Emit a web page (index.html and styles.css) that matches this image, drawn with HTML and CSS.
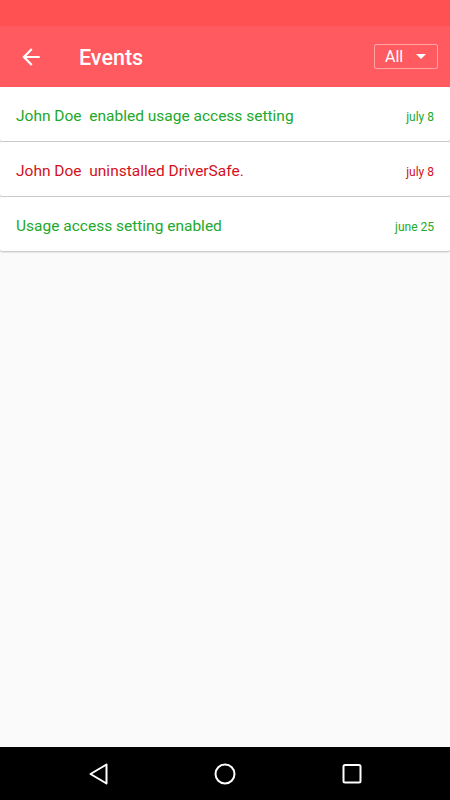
FILE: index.html
```html
<!DOCTYPE html>
<html lang="en">
<head>
  <meta charset="UTF-8">
  <title>Events</title>
  <link rel="stylesheet" href="styles.css">
</head>
<body>
  <div class="phone">
    <div class="status-bar"></div>

    <header class="app-bar">
      <svg class="back" viewBox="0 0 24 24" width="26" height="26">
        <path d="M20 11H7.83l5.59-5.59L12 4l-8 8 8 8 1.41-1.41L7.83 13H20v-2z" fill="#fff"/>
      </svg>
      <h1 class="title">Events</h1>
      <div class="filter">
        <span>All</span>
        <span class="caret"></span>
      </div>
    </header>

    <main class="events">
      <div class="event ok">
        <span class="text">John Doe&nbsp; enabled usage access setting</span>
        <span class="date">july 8</span>
      </div>
      <div class="event bad">
        <span class="text">John Doe&nbsp; uninstalled DriverSafe.</span>
        <span class="date">july 8</span>
      </div>
      <div class="event ok">
        <span class="text">Usage access setting enabled</span>
        <span class="date">june 25</span>
      </div>
    </main>

    <nav class="nav-bar">
      <svg viewBox="0 0 24 24" width="24" height="24">
        <path d="M20.5 2.5 L4.5 12 L20.5 21.5 Z" fill="none" stroke="#fff" stroke-width="2" stroke-linejoin="round"/>
      </svg>
      <svg viewBox="0 0 24 24" width="24" height="24">
        <circle cx="12" cy="12" r="9.5" fill="none" stroke="#fff" stroke-width="2"/>
      </svg>
      <svg viewBox="0 0 24 24" width="24" height="24">
        <rect x="3.5" y="3" width="17" height="17.5" rx="1.5" fill="none" stroke="#fff" stroke-width="2"/>
      </svg>
    </nav>
  </div>
</body>
</html>
```
FILE: styles.css
```css
body {
  margin: 0;
  background: #fafafa;
  font-family: Roboto, "Noto Sans", sans-serif;
}
.phone {
  width: 450px;
  height: 800px;
  display: flex;
  flex-direction: column;
}
.status-bar {
  height: 26px;
  background: #ff5052;
}
.app-bar {
  height: 61px;
  background: #ff5a5f;
  display: flex;
  align-items: center;
  color: #fff;
}
.back {
  margin-left: 18px;
}
.title {
  margin: 2px 0 0 35px;
  font-size: 21.5px;
  font-weight: 500;
  flex: 1;
}
.filter {
  width: 41px;
  height: 23px;
  margin-right: 12px;
  padding: 0 11px 0 10px;
  border: 1px solid rgba(255, 255, 255, 0.45);
  border-radius: 2px;
  display: flex;
  align-items: center;
  justify-content: space-between;
  font-size: 16px;
}
.caret {
  width: 0;
  height: 0;
  border-left: 5px solid transparent;
  border-right: 5px solid transparent;
  border-top: 5px solid #fff;
}
.events {
  flex: 1;
  display: flex;
  flex-direction: column;
  gap: 1px;
}
.event {
  height: 54px;
  background: #fff;
  border-radius: 2px;
  box-shadow: 0 1px 2px rgba(0, 0, 0, 0.25);
  display: flex;
  align-items: center;
  justify-content: space-between;
  padding: 0 16px;
}
.event .text {
  font-size: 15.5px;
  margin-top: 4px;
}
.event .date {
  font-size: 12px;
  margin-top: 6px;
}
.ok {
  color: #22a82a;
}
.bad {
  color: #d3101c;
}
.nav-bar {
  height: 53px;
  background: #000;
  display: flex;
  align-items: center;
  justify-content: center;
  gap: 103px;
}
```
